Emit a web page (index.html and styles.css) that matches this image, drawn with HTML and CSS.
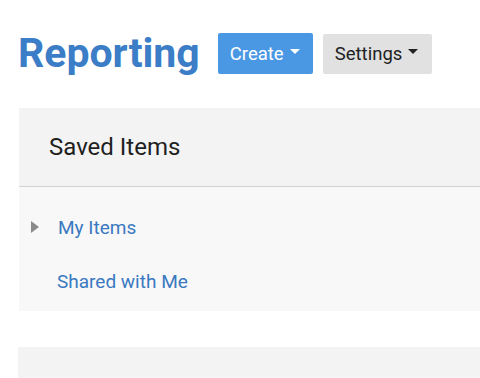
FILE: index.html
```html
<!DOCTYPE html>
<html lang="en">
<head>
  <meta charset="UTF-8" />
  <title>Reporting</title>
  <link rel="stylesheet" href="styles.css">
</head>
<body>
<header class="top">
  <h1>Reporting</h1>
  <button class="btn btn-primary">Create <span class="caret"></span></button>
  <button class="btn btn-default">Settings <span class="caret"></span></button>
</header>

<div class="panel">
  <div class="panel-heading">Saved Items</div>
  <div class="panel-body">
    <div class="tree-row">
      <span class="toggle"></span>
      <a href="#">My Items</a>
    </div>
    <div class="tree-row">
      <a href="#">Shared with Me</a>
    </div>
  </div>
</div>

<div class="panel panel-next"></div>
</body>
</html>
```

FILE: styles.css
```css
body {
  font-family: Roboto, "Liberation Sans", sans-serif;
  margin: 0;
  background-color: #fff;
  overflow: hidden;
}

.top {
  display: flex;
  align-items: center;
  padding: 33px 0 0 18px;
  height: 41px;
}

h1 {
  margin: 0 18px 0 0;
  font-size: 41px;
  font-weight: 700;
  color: #3b7dc6;
  line-height: 41px;
}

.btn {
  font-family: inherit;
  font-size: 18.5px;
  height: 41px;
  border: none;
  border-radius: 2px;
  padding: 0 12px;
  margin-right: 10px;
  display: flex;
  align-items: center;
  gap: 6px;
  cursor: pointer;
}

.btn-primary {
  background-color: #4a98e3;
  color: #fff;
  width: 95px;
}

.btn-default {
  background-color: #e1e1e1;
  color: #222;
  width: 109px;
  height: 40px;
}

.caret {
  width: 0;
  height: 0;
  border-left: 5px solid transparent;
  border-right: 5px solid transparent;
  border-top: 5px solid currentColor;
  margin-top: -4px;
}

.panel {
  margin: 34px 0 0 19px;
}

.panel-heading {
  background-color: #f3f3f3;
  border-bottom: 1px solid #d2d2d2;
  height: 78px;
  padding-left: 30px;
  display: flex;
  align-items: center;
  font-size: 24px;
  color: #1f1f1f;
}

.panel-body {
  background-color: #f8f8f8;
  padding: 26px 0 16px 12px;
}

.tree-row {
  display: flex;
  align-items: center;
  height: 28px;
  margin-bottom: 26px;
  padding-left: 26px;
  position: relative;
}

.tree-row:last-child {
  margin-bottom: 0;
}

.toggle {
  position: absolute;
  left: 0;
  top: 8px;
  width: 0;
  height: 0;
  border-top: 6px solid transparent;
  border-bottom: 6px solid transparent;
  border-left: 8px solid #8a8a8a;
}

.tree-row a {
  font-size: 19px;
  color: #3a79c0;
  text-decoration: none;
}

.tree-row .toggle + a {
  margin-left: 1px;
}

.panel-next {
  margin-top: 36px;
  margin-left: 18px;
  height: 40px;
  background-color: #f3f3f3;
}
```
